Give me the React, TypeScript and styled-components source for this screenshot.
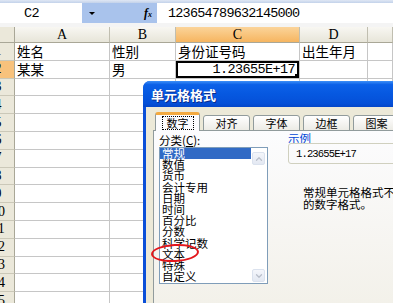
import { Fragment } from "react";
import styled, { createGlobalStyle } from "styled-components";
import { ChevronUp, ChevronDown } from "lucide-react";

const GlobalStyle = createGlobalStyle`
  html, body {
    margin: 0;
    padding: 0;
    background: #fff;
  }
  body {
    font-family: "Noto Sans CJK SC", "Noto Sans", sans-serif;
  }
`;

const Screen = styled.div`
  position: relative;
  width: 393px;
  height: 303px;
  overflow: hidden;
  background: #f4f4f4;
`;

const ToolStrip = styled.div`
  height: 3px;
  background: linear-gradient(#dfe7f4, #c3d2ea);
`;

const FormulaBar = styled.div`
  display: flex;
  height: 20px;
  background: #a9c3ec;
`;

const NameBox = styled.div`
  width: 82px;
  box-sizing: border-box;
  padding-left: 24px;
  background: #fff;
  display: flex;
  align-items: center;
  font-family: "Liberation Mono", monospace;
  font-size: 13.5px;
  letter-spacing: -0.6px;
`;

const DropButton = styled.div`
  width: 20px;
  display: flex;
  align-items: center;
  justify-content: center;

  &::before {
    content: "";
    border-left: 3px solid transparent;
    border-right: 3px solid transparent;
    border-top: 3px solid #000;
  }
`;

const FxArea = styled.div`
  width: 55px;
  box-sizing: border-box;
  padding-right: 5px;
  display: flex;
  align-items: center;
  justify-content: flex-end;
  font-family: "Liberation Serif", serif;
  font-style: italic;
  font-weight: bold;
  font-size: 12px;

  small {
    font-size: 8px;
    margin-top: 3px;
  }
`;

const FormulaInput = styled.div`
  flex: 1;
  background: #fff;
  padding-left: 11px;
  display: flex;
  align-items: center;
  font-family: "Liberation Mono", monospace;
  font-size: 13.5px;
  letter-spacing: -0.8px;
  white-space: nowrap;
`;

const Spacer = styled.div`
  height: 4px;
`;

const Sheet = styled.div`
  display: grid;
  grid-template-columns: 15px 95px 66px 124px 68px 1fr;
  grid-template-rows: 16px;
  grid-auto-rows: 17.8px;
`;

const Corner = styled.div`
  background: #ebe8da;
  border-right: 1px solid #a9a797;
  border-bottom: 1px solid #a9a797;
`;

const ColHead = styled.div<{ $sel?: boolean }>`
  box-sizing: border-box;
  background: ${(p) =>
    p.$sel
      ? "linear-gradient(#fbd49a, #f6b560)"
      : "linear-gradient(#f8f7f2, #e7e5d9)"};
  border-right: 1px solid #c0beb0;
  border-bottom: 1px solid #a9a797;
  display: flex;
  align-items: center;
  justify-content: center;
  font-family: "Liberation Serif", serif;
  font-size: 14px;
`;

const RowHead = styled.div<{ $sel?: boolean }>`
  box-sizing: border-box;
  overflow: hidden;
  background: ${(p) => (p.$sel ? "#f8c27c" : "#ebe8da")};
  border-right: 1px solid #a9a797;
  border-bottom: 1px solid #cbc8b8;
  display: flex;
  align-items: center;
  font-family: "Liberation Serif", serif;
  font-size: 14px;

  span {
    flex-shrink: 0;
    width: 30px;
    margin-left: -17px;
    text-align: center;
  }
`;

const Cell = styled.div<{ $active?: boolean }>`
  position: relative;
  box-sizing: border-box;
  overflow: hidden;
  white-space: nowrap;
  padding: 0 2px;
  background: #fff;
  border-right: 1px solid #c6c6c6;
  border-bottom: 1px solid #c6c6c6;
  display: flex;
  align-items: center;
  font-size: 13.5px;

  ${(p) =>
    p.$active &&
    `
    justify-content: flex-end;
    padding-right: 4px;
    box-shadow: inset 0 0 0 2px #000;
    font-family: "Liberation Mono", monospace;
    letter-spacing: -0.6px;

    &::after {
      content: "";
      position: absolute;
      right: 0;
      bottom: 0;
      width: 4px;
      height: 4px;
      background: #000;
    }
  `}
`;

const Dialog = styled.div`
  position: absolute;
  left: 143px;
  top: 81px;
  width: 300px;
  height: 260px;
  display: flex;
  flex-direction: column;
  background: #0b4fd8;
  border-radius: 7px 7px 0 0;
  overflow: hidden;
`;

const TitleBar = styled.div`
  height: 26px;
  flex-shrink: 0;
  padding-left: 8px;
  display: flex;
  align-items: center;
  background: linear-gradient(
    #3d8ff7 0%,
    #0c61e8 14%,
    #0658e0 50%,
    #0550d8 86%,
    #0446c8 100%
  );
  color: #fff;
  font-weight: bold;
  font-size: 13px;
  text-shadow: 1px 1px 0 #0a2c8c;
`;

const Body = styled.div`
  flex: 1;
  margin-left: 3px;
  padding: 6px 0 0 7px;
  background: #ece9d8;
`;

const Tabs = styled.div`
  position: relative;
  z-index: 1;
  height: 18px;
  margin: 0 0 -1px 2px;
  display: flex;
  align-items: flex-end;
`;

const Tab = styled.div<{ $active?: boolean }>`
  box-sizing: border-box;
  width: ${(p) => (p.$active ? 45 : 47)}px;
  height: ${(p) => (p.$active ? 19 : 16)}px;
  margin-right: 3px;
  border: 1px solid #919b9c;
  border-top: ${(p) => (p.$active ? "3px solid #f3a93f" : "1px solid #919b9c")};
  border-bottom: ${(p) => (p.$active ? "none" : "1px solid #919b9c")};
  border-radius: 3px 3px 0 0;
  background: ${(p) =>
    p.$active ? "#fcfcfe" : "linear-gradient(#ffffff, #ecebe5)"};
  display: flex;
  align-items: center;
  justify-content: center;
  font-size: 11px;

  span {
    padding: 0 4px;
    line-height: 12px;
    border: ${(p) => (p.$active ? "1px dotted #000" : "none")};
  }
`;

const Panel = styled.div`
  height: 200px;
  padding: 3px 0 0 5px;
  border: 1px solid #919b9c;
  border-right: none;
  background: linear-gradient(#fcfcfe, #f1efe6);
  display: grid;
  grid-template-columns: 109px 1fr;
  column-gap: 20px;
  align-items: start;
  font-size: 11px;
`;

const Column = styled.div<{ $shift?: number }>`
  display: flex;
  flex-direction: column;
  margin-top: ${(p) => p.$shift ?? 0}px;
  min-width: 0;
`;

const FieldLabel = styled.div<{ $blue?: boolean }>`
  height: 12px;
  line-height: 12px;
  margin-bottom: 1px;
  font-size: 11.5px;
  color: ${(p) => (p.$blue ? "#0046d5" : "#000")};
`;

const ListBox = styled.div`
  position: relative;
  box-sizing: border-box;
  height: 137px;
  border: 1px solid #7f9db9;
  background: #fff;
  display: flex;
`;

const Items = styled.div`
  flex: 1;
`;

const Item = styled.div<{ $selected?: boolean }>`
  height: 11.2px;
  line-height: 11.2px;
  padding-left: 2px;
  font-size: 11.5px;
  white-space: nowrap;
  background: ${(p) => (p.$selected ? "#316ac5" : "transparent")};
  color: ${(p) => (p.$selected ? "#fff" : "#000")};
`;

const ScrollTrack = styled.div`
  width: 16px;
  box-sizing: border-box;
  padding: 4px 2px 1px 1px;
  display: flex;
  flex-direction: column;
  justify-content: space-between;
`;

const ScrollButton = styled.div`
  width: 13px;
  height: 13px;
  box-sizing: border-box;
  border: 1px solid #dbe2ee;
  border-radius: 2px;
  background: linear-gradient(#f4f6fb, #e3e8f2);
  display: flex;
  align-items: center;
  justify-content: center;
  color: #b9bfca;
`;

const Mark = styled.div`
  position: absolute;
  left: -9px;
  top: 96px;
  width: 48px;
  height: 18px;
  box-sizing: border-box;
  border: 2.5px solid #e3161b;
  border-radius: 50%;
  transform: rotate(-3deg);
`;

const SampleBox = styled.div`
  height: 21px;
  margin-top: -2px;
  box-sizing: border-box;
  padding-left: 7px;
  border: 1px solid #d0d0bf;
  border-radius: 3px;
  display: flex;
  align-items: center;
  font-family: "Liberation Mono", monospace;
  font-size: 10.5px;
  letter-spacing: -0.85px;
`;

const Description = styled.div`
  margin-top: 22px;
  padding-left: 15px;
  font-size: 11.5px;
  line-height: 12px;
  white-space: nowrap;
`;

const columns = ["A", "B", "C", "D", ""];

const rows: string[][] = [
  ["姓名", "性别", "身份证号码", "出生年月", ""],
  ["某某", "男", "1.23655E+17", "", ""],
  ...Array.from({ length: 13 }, () => ["", "", "", "", ""]),
];

const categories = [
  "常规",
  "数值",
  "货币",
  "会计专用",
  "日期",
  "时间",
  "百分比",
  "分数",
  "科学记数",
  "文本",
  "特殊",
  "自定义",
];

const tabs = ["数字", "对齐", "字体", "边框", "图案"];

export default function App() {
  return (
    <>
      <GlobalStyle />
      <Screen>
        <ToolStrip />
        <FormulaBar>
          <NameBox>C2</NameBox>
          <DropButton />
          <FxArea>
            f<small>x</small>
          </FxArea>
          <FormulaInput>123654789632145000</FormulaInput>
        </FormulaBar>
        <Spacer />

        <Sheet>
          <Corner />
          {columns.map((c, i) => (
            <ColHead key={i} $sel={c === "C"}>
              {c}
            </ColHead>
          ))}
          {rows.map((row, r) => (
            <Fragment key={r}>
              <RowHead $sel={r === 1}>
                <span>{r + 1}</span>
              </RowHead>
              {row.map((value, c) => (
                <Cell key={c} $active={r === 1 && c === 2}>
                  {value}
                </Cell>
              ))}
            </Fragment>
          ))}
        </Sheet>

        <Dialog>
          <TitleBar>单元格格式</TitleBar>
          <Body>
            <Tabs>
              {tabs.map((t, i) => (
                <Tab key={t} $active={i === 0}>
                  <span>{t}</span>
                </Tab>
              ))}
            </Tabs>
            <Panel>
              <Column>
                <FieldLabel>
                  分类(<u>C</u>):
                </FieldLabel>
                <ListBox>
                  <Items>
                    {categories.map((c, i) => (
                      <Item key={c} $selected={i === 0}>
                        {c}
                      </Item>
                    ))}
                  </Items>
                  <ScrollTrack>
                    <ScrollButton>
                      <ChevronUp size={10} strokeWidth={3} />
                    </ScrollButton>
                    <ScrollButton>
                      <ChevronDown size={10} strokeWidth={3} />
                    </ScrollButton>
                  </ScrollTrack>
                  <Mark />
                </ListBox>
              </Column>
              <Column $shift={-2}>
                <FieldLabel $blue>示例</FieldLabel>
                <SampleBox>1.23655E+17</SampleBox>
                <Description>
                  <div>常规单元格格式不包含任何特定</div>
                  <div>的数字格式。</div>
                </Description>
              </Column>
            </Panel>
          </Body>
        </Dialog>
      </Screen>
    </>
  );
}
